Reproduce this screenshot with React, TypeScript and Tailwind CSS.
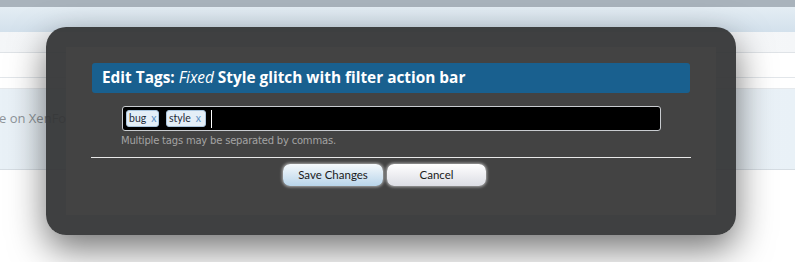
import React from "react";

export default function App() {
  return (
    <div className="relative w-[795px] h-[262px] overflow-hidden bg-white" style={{ fontFamily: "Lato, 'Open Sans', sans-serif" }}>
      {/* page behind */}
      <div className="h-[7px] bg-[#a9b3bc]" />
      <div className="h-[25px] bg-gradient-to-b from-[#e4edf4] to-[#d3e1ec]" />
      <div className="h-[21px] bg-gradient-to-r from-[#f4f6f8] via-white to-[#f4f6f8] border-b border-[#dfe3e7]" />
      <div className="h-[25px] border-b border-[#e2e6ea]" />
      <div className="h-[11px] border-b border-[#e6e9ec]" />
      <div className="h-[81px] bg-gradient-to-r from-[#e9f1f7] via-[#f3f7fa] to-[#e9f1f7] border-b border-[#d6dde3] pt-[20px]">
        <div className="ml-[-1px] text-[13px] text-[#8f959a] whitespace-nowrap" style={{ fontFamily: "'Open Sans', sans-serif" }}>
          e on XenForo.com
        </div>
      </div>
      <div className="h-[90px] bg-white" />

      {/* dialog overlay */}
      <div className="absolute left-[46px] top-[27px] w-[690px] h-[208px] rounded-[20px] bg-[#333435]/[0.94] p-[20px] shadow-[0_14px_36px_rgba(0,0,0,0.55)]">
        <div className="h-[168px] bg-[#434343]/[0.95] px-[26px] pt-[16px]">
          <div className="h-[30px] rounded-[3px] bg-[#19608f] flex items-center pl-[10px] text-white text-[15.4px] font-bold whitespace-nowrap" style={{ fontFamily: "'Open Sans', sans-serif" }}>
            Edit Tags:&nbsp;<span className="italic font-normal">Fixed</span>&nbsp;Style glitch with filter action bar
          </div>
          <div className="ml-[30px] mt-[13px] w-[539px] h-[25px] rounded-[3px] border border-[#c9ccd0] bg-black flex items-center pl-[3px] gap-[7px]">
            <span className="h-[17px] w-[33px] rounded-[3px] bg-[#e3eef7] border border-[#a9c4dc] flex items-center pl-[2px] text-[10.5px] text-[#1e2b38] leading-none whitespace-nowrap overflow-hidden">
              bug<span className="ml-[5px] text-[#5b8fc2]">x</span>
            </span>
            <span className="h-[17px] w-[40px] rounded-[3px] bg-[#e3eef7] border border-[#a9c4dc] flex items-center pl-[2px] text-[10.5px] text-[#1e2b38] leading-none whitespace-nowrap overflow-hidden">
              style<span className="ml-[5px] text-[#5b8fc2]">x</span>
            </span>
            <span className="ml-[-2px] w-px h-[18px] bg-white" />
          </div>
          <div className="ml-[29px] mt-[4px] text-[10px] leading-[12px] tracking-[-0.2px] text-[#a4a4a4]" style={{ fontFamily: "'DejaVu Sans', sans-serif" }}>
            Multiple tags may be separated by commas.
          </div>
          <div className="mx-[-1px] mt-[10px] h-px bg-[#e8e8e8]" />
          <div className="flex gap-[4px] mt-[6px] pl-[191px]">
            <button className="w-[100px] h-[22px] rounded-[7px] bg-gradient-to-b from-[#f5f9fc] to-[#b9d5ea] text-[11.5px] text-[#1a1a1a] shadow-[0_0_3px_1px_rgba(255,255,255,0.55)]">
              Save Changes
            </button>
            <button className="w-[99px] h-[22px] rounded-[7px] bg-gradient-to-b from-white to-[#dcdde4] text-[11.5px] text-[#1a1a1a] shadow-[0_0_3px_1px_rgba(255,255,255,0.55)]">
              Cancel
            </button>
          </div>
        </div>
      </div>
    </div>
  );
}
